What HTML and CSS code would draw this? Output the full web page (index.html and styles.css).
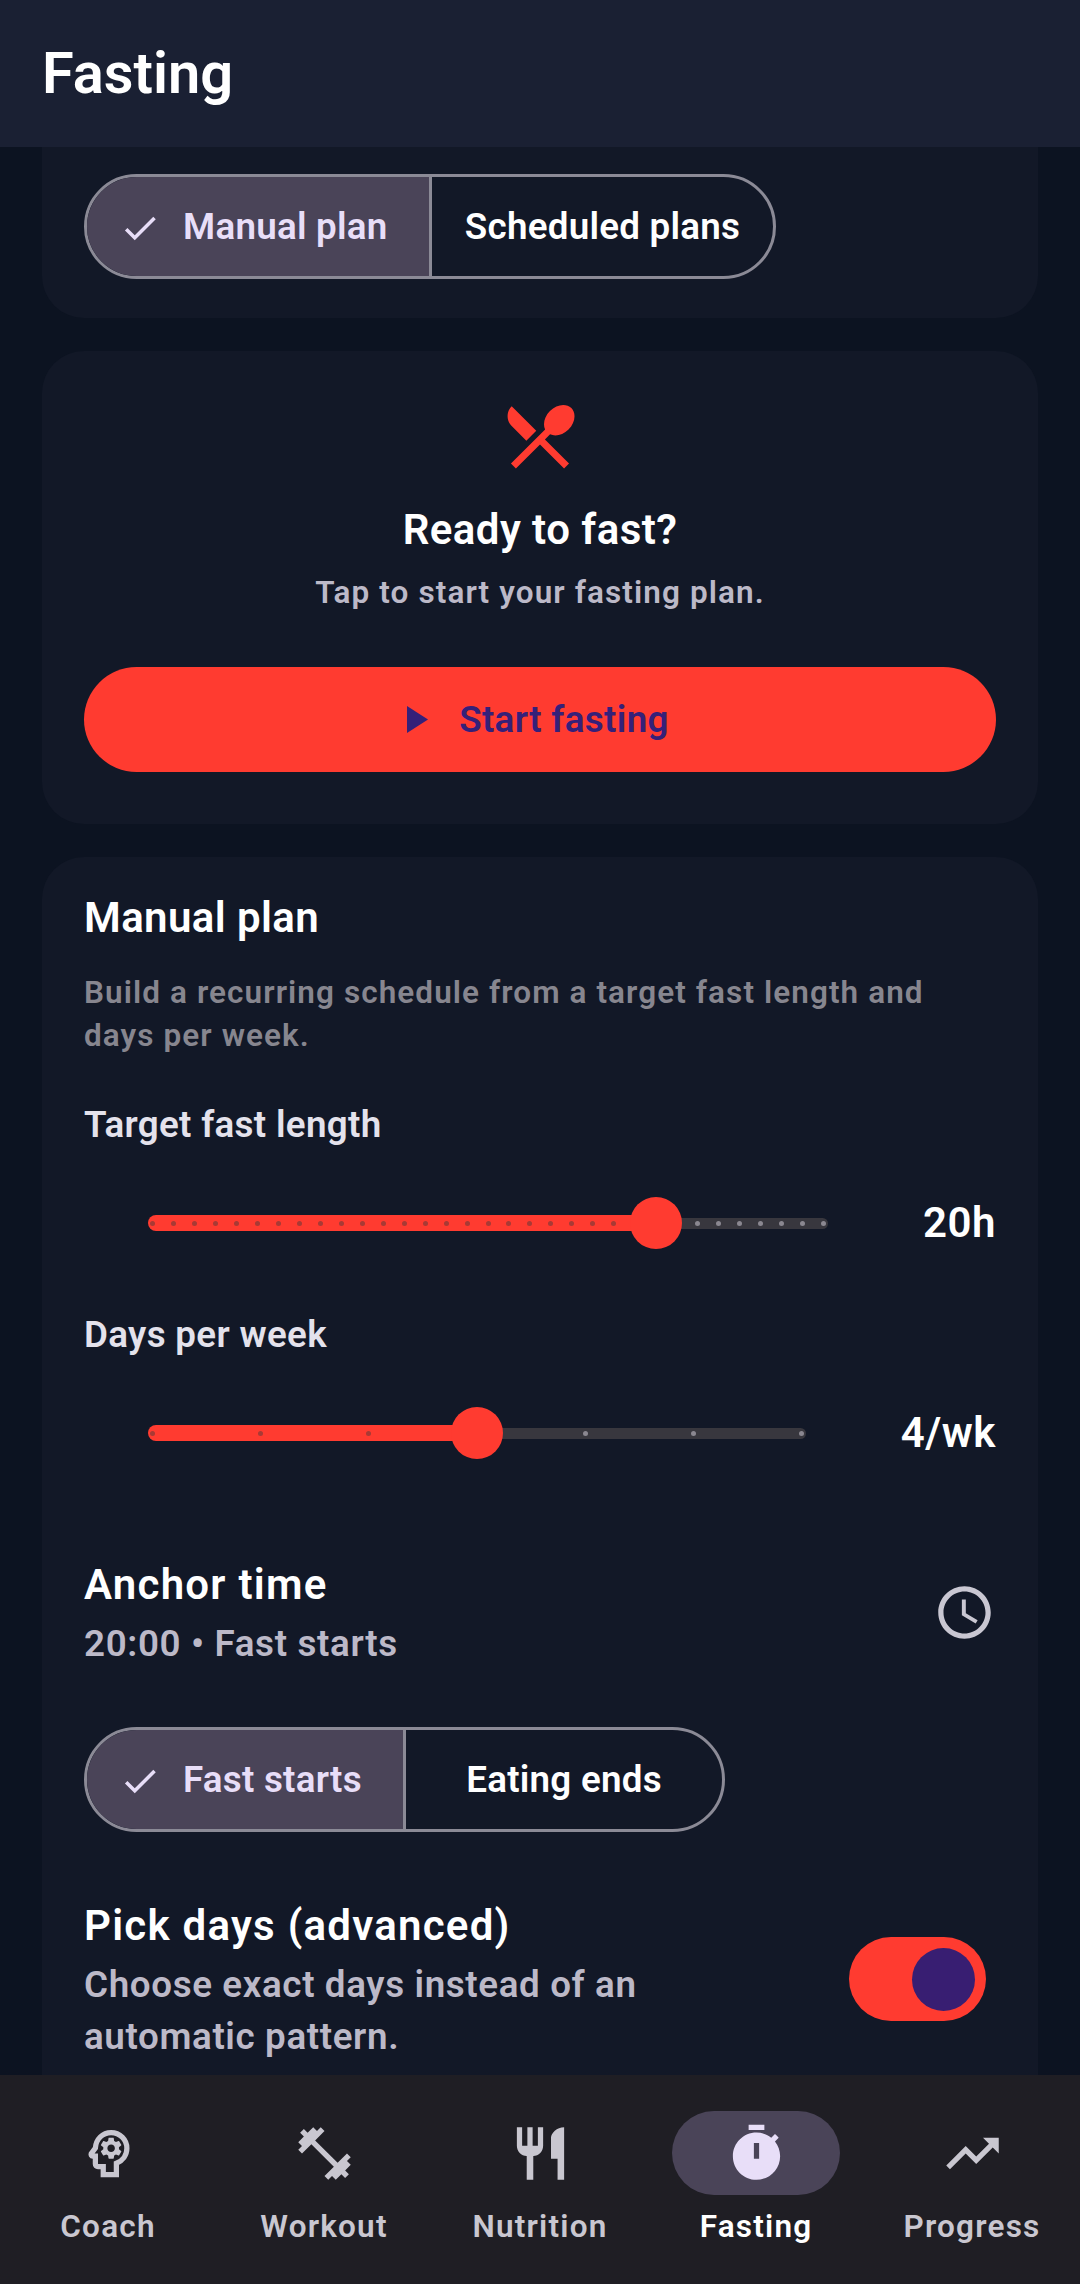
FILE: index.html
```html
<!DOCTYPE html>
<html lang="en">
<head>
<meta charset="utf-8">
<title>Fasting</title>
<link rel="stylesheet" href="styles.css">
</head>
<body>
<div class="app">
  <header class="appbar"><h1 class="appbar-title">Fasting</h1></header>
  <main class="content">
    <section class="card card-top">
      <div class="segmented">
        <div class="seg seg-on seg-plan-a"><svg class="check" viewBox="0 0 24 24"><path d="M9 16.17L4.83 12l-1.42 1.41L9 19 21 7l-1.41-1.41z"/></svg><span>Manual plan</span></div>
        <div class="seg seg-plan-b"><span>Scheduled plans</span></div>
      </div>
    </section>
    <section class="card card-ready">
      <svg class="ready-icon" viewBox="0 0 24 24"><path d="M8.1 13.34l2.83-2.83L3.91 3.5c-1.56 1.56-1.56 4.09 0 5.66l4.19 4.18zm6.78-1.81c1.53.71 3.68.21 5.27-1.38 1.91-1.91 2.28-4.65.81-6.12-1.46-1.46-4.2-1.1-6.12.81-1.59 1.59-2.09 3.74-1.38 5.27L3.7 19.87l1.41 1.41L12 14.41l6.88 6.88 1.41-1.41L13.41 13l1.47-1.47z"/></svg>
      <h2 class="ready-title">Ready to fast?</h2>
      <p class="ready-sub">Tap to start your fasting plan.</p>
      <div class="start-btn"><svg class="play" viewBox="0 0 21 27"><path d="M0 0l21 13.5L0 27z"/></svg><span>Start fasting</span></div>
    </section>
    <section class="card card-plan">
      <h2 class="plan-title">Manual plan</h2>
      <p class="plan-desc">Build a recurring schedule from a target fast length and days per week.</p>
      <div class="field-label label-first">Target fast length</div>
      <div class="slider-row">
        <div class="slider">
          <div class="track-on" style="width:75%"></div>
          <div class="track-off"></div>
          <div class="ticks">
            <i class="t on"></i><i class="t on"></i><i class="t on"></i><i class="t on"></i><i class="t on"></i><i class="t on"></i><i class="t on"></i><i class="t on"></i><i class="t on"></i><i class="t on"></i><i class="t on"></i><i class="t on"></i><i class="t on"></i><i class="t on"></i><i class="t on"></i><i class="t on"></i><i class="t on"></i><i class="t on"></i><i class="t on"></i><i class="t on"></i><i class="t on"></i><i class="t on"></i><i class="t on"></i><i class="t on"></i><i class="t on"></i><i class="t"></i><i class="t"></i><i class="t"></i><i class="t"></i><i class="t"></i><i class="t"></i><i class="t"></i><i class="t"></i>
          </div>
          <div class="thumb-lane"><div class="thumb" style="left:75%"></div></div>
        </div>
        <div class="slider-value">20h</div>
      </div>
      <div class="field-label label-second">Days per week</div>
      <div class="slider-row">
        <div class="slider">
          <div class="track-on" style="width:50%"></div>
          <div class="track-off"></div>
          <div class="ticks">
            <i class="t on"></i><i class="t on"></i><i class="t on"></i><i class="t on"></i><i class="t"></i><i class="t"></i><i class="t"></i>
          </div>
          <div class="thumb-lane"><div class="thumb" style="left:50%"></div></div>
        </div>
        <div class="slider-value">4/wk</div>
      </div>
      <div class="anchor">
        <div class="anchor-text">
          <div class="row-title">Anchor time</div>
          <div class="row-sub">20:00 • Fast starts</div>
        </div>
        <svg class="clock" viewBox="0 0 24 24"><path d="M11.99 2C6.47 2 2 6.48 2 12s4.47 10 9.99 10C17.52 22 22 17.52 22 12S17.52 2 11.99 2zM12 20c-4.42 0-8-3.58-8-8s3.58-8 8-8 8 3.58 8 8-3.58 8-8 8zm.5-13H11v6l5.25 3.15.75-1.23-4.5-2.67z"/></svg>
      </div>
      <div class="segmented seg-anchor">
        <div class="seg seg-on seg-anchor-a"><svg class="check" viewBox="0 0 24 24"><path d="M9 16.17L4.83 12l-1.42 1.41L9 19 21 7l-1.41-1.41z"/></svg><span>Fast starts</span></div>
        <div class="seg seg-anchor-b"><span>Eating ends</span></div>
      </div>
      <div class="pick">
        <div class="pick-text">
          <div class="row-title">Pick days (advanced)</div>
          <div class="pick-sub">Choose exact days instead of an automatic pattern.</div>
        </div>
        <div class="switch"><div class="switch-thumb"></div></div>
      </div>
    </section>
  </main>
  <nav class="navbar">
    <div class="nav-item">
      <div class="nav-pill"><svg class="nav-icon" viewBox="0 0 24 24"><path class="head" d="M13 4C9.7 4 7.2 6.6 7 9.9L5.4 12.1c-.1.3.05.9.6.9H7v3c0 .6.4 1 1 1h2v3h5v-4.3c2.4-.9 4-3.1 4-5.7 0-3.3-2.7-6-6-6z"/><path fill-rule="evenodd" d="M16 10c0 .13-.01.26-.02.39l.83.66c.08.06.1.16.05.25l-.8 1.39c-.05.09-.16.12-.24.09l-.99-.4c-.21.16-.43.29-.67.39L14 13.83c-.01.1-.1.17-.2.17h-1.6c-.1 0-.18-.07-.2-.17l-.15-1.06c-.25-.1-.47-.23-.68-.39l-.99.4c-.09.03-.2 0-.25-.09l-.8-1.39c-.05-.08-.03-.19.05-.25l.84-.66c-.01-.13-.02-.26-.02-.39s.02-.27.04-.39l-.85-.66c-.08-.06-.1-.16-.05-.26l.8-1.38c.05-.09.15-.12.24-.09l1 .4c.2-.15.43-.29.67-.39L12 6.17c.02-.1.1-.17.2-.17h1.6c.1 0 .18.07.2.17l.15 1.06c.24.1.46.23.67.39l1-.4c.09-.03.2 0 .24.09l.8 1.38c.05.09.03.2-.05.26l-.85.66c.03.12.04.25.04.39zM13 8.57c-.79 0-1.43.64-1.43 1.43s.64 1.43 1.43 1.43 1.43-.64 1.43-1.43-.64-1.43-1.43-1.43z"/></svg></div>
      <span class="nav-label">Coach</span>
    </div>
    <div class="nav-item">
      <div class="nav-pill"><svg class="nav-icon" viewBox="0 0 24 24"><path d="M20.57 14.86L22 13.43 20.57 12 17 15.57 8.43 7 12 3.43 10.57 2 9.14 3.43 7.71 2 5.57 4.14 4.14 2.71 2.71 4.14l1.43 1.43L2 7.71l1.43 1.43L2 10.57 3.43 12 7 8.43 15.57 17 12 20.57 13.43 22l1.43-1.43L16.29 22l2.14-2.14 1.43 1.43 1.43-1.43-1.43-1.43L22 16.29z"/></svg></div>
      <span class="nav-label">Workout</span>
    </div>
    <div class="nav-item">
      <div class="nav-pill"><svg class="nav-icon" viewBox="0 0 24 24"><path d="M11 9H9V2H7v7H5V2H3v7c0 2.12 1.66 3.84 3.75 3.97V22h2.5v-9.03C11.34 12.84 13 11.12 13 9V2h-2v7zm5-3v8h2.5v8H21V2c-2.76 0-5 2.24-5 4z"/></svg></div>
      <span class="nav-label">Nutrition</span>
    </div>
    <div class="nav-item nav-active">
      <div class="nav-pill"><svg class="nav-icon" viewBox="0 0 24 24"><path fill-rule="evenodd" d="M15 1H9v2h6V1zM19.03 7.39l1.42-1.42c-.43-.51-.9-.99-1.41-1.41l-1.42 1.42C16.07 4.74 14.12 4 12 4c-4.97 0-9 4.03-9 9s4.02 9 9 9 9-4.03 9-9c0-2.12-.74-4.07-1.97-5.61zM13 14h-2V8h2v6z"/></svg></div>
      <span class="nav-label">Fasting</span>
    </div>
    <div class="nav-item">
      <div class="nav-pill"><svg class="nav-icon" viewBox="0 0 24 24"><path d="M16 6l2.29 2.29-4.88 4.88-4-4L2 16.59 3.41 18l6-6 4 4 6.3-6.29L22 12V6z"/></svg></div>
      <span class="nav-label">Progress</span>
    </div>
  </nav>
</div>
</body>
</html>
```

FILE: styles.css
```css
* { box-sizing: border-box; margin: 0; padding: 0; }
html, body { height: 100%; background: #0c1321; }
body { font-family: Roboto, "Noto Sans", sans-serif; font-weight: 600; color: #fff; overflow: hidden; }
.app { width: 1080px; height: 2284px; display: flex; flex-direction: column; overflow: hidden; }

.appbar { height: 147px; flex: none; background: #1a2033; display: flex; align-items: center; padding: 0 42px; }
.appbar-title { font-size: 57.75px; font-weight: 600; line-height: 1; }

.content { flex: 1; min-height: 0; overflow: hidden; display: flex; flex-direction: column; gap: 33px; padding: 0 42px; }
.card { background: #121827; border-radius: 42px; padding: 0 42px; flex: none; }
.card-top { height: 171px; padding-top: 27px; border-radius: 0 0 42px 42px; }

.segmented { display: flex; height: 105px; border: 3px solid #8b8a96; border-radius: 53px; overflow: hidden; width: 692px; }
.seg { display: flex; align-items: center; font-size: 36.75px; font-weight: 600; line-height: 1; letter-spacing: .25px; color: #fff; height: 100%; padding-top: 2px; }
.seg-on { background: #4a4458; color: #e8def8; padding-left: 32px; border-right: 3px solid #8b8a96; }
.check { width: 42px; height: 42px; fill: #e8def8; margin-right: 22px; flex: none; }
.seg-plan-a { width: 345px; }
.seg-plan-b { flex: 1; justify-content: center; }
.seg-anchor { width: 641px; margin-top: 60px; }
.seg-anchor-a { width: 319px; }
.seg-anchor-b { flex: 1; justify-content: center; }

.card-ready { height: 473px; display: flex; flex-direction: column; align-items: center; padding-top: 43px; }
.ready-icon { width: 84px; height: 84px; fill: #ff3b30; flex: none; }
.ready-title { font-size: 42px; font-weight: 600; line-height: 48px; letter-spacing: .45px; margin-top: 28px; }
.ready-sub { font-size: 31.5px; font-weight: 600; letter-spacing: 1.1px; line-height: 40px; color: #bcb9c8; margin-top: 19px; }
.start-btn { width: 912px; height: 105px; flex: none; border-radius: 53px; background: #ff3b30; color: #352079; display: flex; align-items: center; justify-content: center; gap: 31px; padding-right: 4px; font-size: 36.75px; font-weight: 600; letter-spacing: .35px; margin-top: 54px; }
.play { width: 21px; height: 27px; fill: #352079; }

.card-plan { height: 1300px; padding-top: 37px; }
.plan-title { font-size: 42px; font-weight: 600; line-height: 48px; letter-spacing: .4px; }
.plan-desc { font-size: 31.5px; font-weight: 600; line-height: 43px; letter-spacing: 1.08px; color: #87868f; margin-top: 29px; width: 860px; }
.field-label { font-size: 36.75px; font-weight: 600; line-height: 42px; letter-spacing: .33px; color: #e4e2ec; }
.label-first { margin-top: 47px; }
.label-second { margin-top: 65px; }

.slider-row { display: flex; align-items: center; height: 52px; margin-top: 51px; }
.slider { position: relative; flex: 1; height: 52px; margin: 0 95px 0 64px; display: flex; align-items: center; }
.track-on { height: 16px; background: #ff3b30; border-radius: 8px 0 0 8px; flex: none; }
.track-off { height: 11px; flex: 1; background: #38373e; border-radius: 0 6px 6px 0; }
.ticks { position: absolute; left: 2px; right: 2px; top: 24px; height: 5px; display: flex; justify-content: space-between; }
.t { width: 5px; height: 5px; border-radius: 50%; background: #8a8790; display: block; }
.t.on { background: #a83a35; }
.thumb-lane { position: absolute; left: 4px; right: 4px; top: 0; height: 52px; }
.thumb { position: absolute; top: 0; width: 52px; height: 52px; margin-left: -26px; border-radius: 50%; background: #ff3b30; }
.slider-value { font-size: 42px; font-weight: 600; line-height: 1; letter-spacing: .5px; }

.anchor { display: flex; align-items: center; justify-content: space-between; margin-top: 101px; }
.row-title { font-size: 42px; font-weight: 600; line-height: 50px; letter-spacing: 1.25px; }
.row-sub { font-size: 36.75px; font-weight: 600; line-height: 46px; letter-spacing: .65px; color: #bcb9c8; margin-top: 11px; }
.clock { width: 63px; height: 63px; fill: #c9c7d2; margin-bottom: 3px; }

.pick { display: flex; align-items: center; justify-content: space-between; margin-top: 69px; }
.pick-text { width: 600px; }
.pick-sub { font-size: 36.75px; font-weight: 600; line-height: 52px; letter-spacing: .63px; color: #bcb9c8; margin-top: 8px; }
.switch { width: 137px; height: 84px; border-radius: 42px; background: #ff3b30; display: flex; align-items: center; justify-content: flex-end; padding-right: 11px; margin: 0 10px 6px 0; }
.switch-thumb { width: 63px; height: 63px; border-radius: 50%; background: #381e72; }

.navbar { height: 209px; flex: none; background: #1f1e24; display: flex; position: relative; }
.nav-item { flex: 1; display: flex; flex-direction: column; align-items: center; padding-top: 36px; }
.nav-pill { width: 168px; height: 84px; border-radius: 42px; display: flex; align-items: center; justify-content: center; }
.nav-icon { width: 63px; height: 63px; fill: #c9c7d0; }
.nav-icon .head { fill: none; stroke: #c9c7d0; stroke-width: 2; }
.nav-label { font-size: 31.5px; font-weight: 600; line-height: 40px; letter-spacing: 1.2px; color: #c9c7d0; margin-top: 12px; }
.nav-active .nav-pill { background: #4a4458; }
.nav-active .nav-icon { fill: #e8def8; }
.nav-active .nav-label { color: #fff; }
```
